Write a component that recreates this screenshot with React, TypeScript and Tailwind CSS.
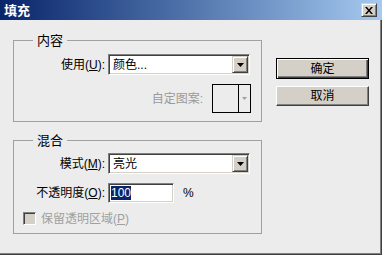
import React from "react";

function DropArrow() {
  return (
    <svg width="7" height="4" viewBox="0 0 7 4" className="block">
      <path d="M0 0h7L3.5 4z" fill="#000" />
    </svg>
  );
}

function Select({ value }: { value: string }) {
  return (
    <div className="ml-[3px] w-[142px] h-[21px] flex items-stretch p-[1px] bg-white border border-t-[#808080] border-l-[#808080] border-r-white border-b-white shadow-[inset_1px_1px_0_#404040,inset_-1px_-1px_0_#d4d0c8]">
      <div className="flex-1 flex items-center pl-[3px] text-[12px] text-black">{value}</div>
      <div className="w-[16px] flex items-center justify-center bg-[#d4d0c8] border border-t-[#d4d0c8] border-l-[#d4d0c8] border-r-[#404040] border-b-[#404040] shadow-[inset_1px_1px_0_#fff,inset_-1px_-1px_0_#808080]">
        <DropArrow />
      </div>
    </div>
  );
}

export default function App() {
  return (
    <div className="w-[382px] h-[255px] bg-[#ececec] flex flex-col overflow-hidden [font-family:'Liberation_Sans','Noto_Sans_CJK_SC',sans-serif] shadow-[inset_-1px_-1px_0_#404040,inset_-2px_-2px_0_#808080]">
      <div className="h-[20px] shrink-0 flex items-center pl-[4px] pr-[5px] bg-linear-to-r from-[#0a246a] to-[#a6caf0]">
        <span className="text-white font-bold text-[13px] leading-none">填充</span>
        <div className="ml-auto w-[16px] h-[14px] flex items-center justify-center bg-[#d4d0c8] border border-t-[#d4d0c8] border-l-[#d4d0c8] border-r-[#404040] border-b-[#404040] shadow-[inset_1px_1px_0_#fff,inset_-1px_-1px_0_#808080]">
          <svg width="8" height="7" viewBox="0 0 8 7" className="block">
            <path d="M0 0h2l2 2.5L6 0h2L5 3.5 8 7H6L4 4.5 2 7H0l3-3.5z" fill="#000" />
          </svg>
        </div>
      </div>
      <div className="flex pl-[13px] pt-[20px]">
        <div className="w-[249px] flex flex-col">
          <div className="relative border border-[#a0a0a0] pt-[13px] pb-[8px]">
            <span className="absolute left-[19px] -top-[8px] px-[4px] bg-[#ececec] text-[13px] leading-[15px] text-black">内容</span>
            <div className="flex items-center h-[21px]">
              <div className="w-[91px] text-right text-[12px] text-black">
                使用(<span className="underline">U</span>):
              </div>
              <Select value="颜色..." />
            </div>
            <div className="mt-[9px] h-[29px] flex items-center justify-end pr-[10px]">
              <span className="text-[12px] text-[#9a9a9a]">自定图案:</span>
              <div className="ml-[9px] w-[39px] h-[29px] flex border border-black">
                <div className="flex-1" />
                <div className="w-[12px] border-l border-black flex items-center justify-center">
                  <svg width="5" height="3" viewBox="0 0 5 3" className="block">
                    <path d="M0 0h5L2.5 3z" fill="#a0a0a0" />
                  </svg>
                </div>
              </div>
            </div>
          </div>
          <div className="relative mt-[18px] border border-[#a0a0a0] pt-[12px] pb-[8px]">
            <span className="absolute left-[19px] -top-[8px] px-[4px] bg-[#ececec] text-[13px] leading-[15px] text-black">混合</span>
            <div className="flex items-center h-[22px]">
              <div className="w-[91px] text-right text-[12px] text-black">
                模式(<span className="underline">M</span>):
              </div>
              <div className="h-[22px] flex">
                <Select value="亮光" />
              </div>
            </div>
            <div className="mt-[8px] flex items-center h-[20px]">
              <div className="w-[91px] text-right text-[12px] text-black">
                不透明度(<span className="underline">O</span>):
              </div>
              <div className="ml-[3px] w-[66px] h-[20px] flex items-center pl-[2px] bg-white border border-t-[#808080] border-l-[#808080] border-r-white border-b-white shadow-[inset_1px_1px_0_#404040,inset_-1px_-1px_0_#d4d0c8]">
                <span className="bg-[#0a246a] text-white text-[12px] leading-[14px]">100</span>
              </div>
              <span className="ml-[9px] text-[12px] text-black">%</span>
            </div>
            <div className="mt-[9px] h-[13px] flex items-center pl-[9px]">
              <div className="w-[13px] h-[13px] bg-[#d4d0c8] border border-t-[#808080] border-l-[#808080] border-r-white border-b-white shadow-[inset_1px_1px_0_#404040,inset_-1px_-1px_0_#d4d0c8]" />
              <span className="ml-[5px] text-[12px] text-[#a0a0a0]">
                保留透明区域(<span className="underline">P</span>)
              </span>
            </div>
          </div>
        </div>
        <div className="ml-[14px] pt-[18px] w-[93px] flex flex-col">
          <div className="h-[21px] flex items-center justify-center text-[12px] text-black bg-[#d4d0c8] border border-black shadow-[inset_1px_1px_0_#fff,inset_-1px_-1px_0_#404040,inset_-2px_-2px_0_#808080]">
            确定
          </div>
          <div className="mt-[7px] h-[20px] flex items-center justify-center text-[12px] text-black bg-[#d4d0c8] border border-t-white border-l-white border-r-[#404040] border-b-[#404040] shadow-[inset_-1px_-1px_0_#808080]">
            取消
          </div>
        </div>
      </div>
    </div>
  );
}
